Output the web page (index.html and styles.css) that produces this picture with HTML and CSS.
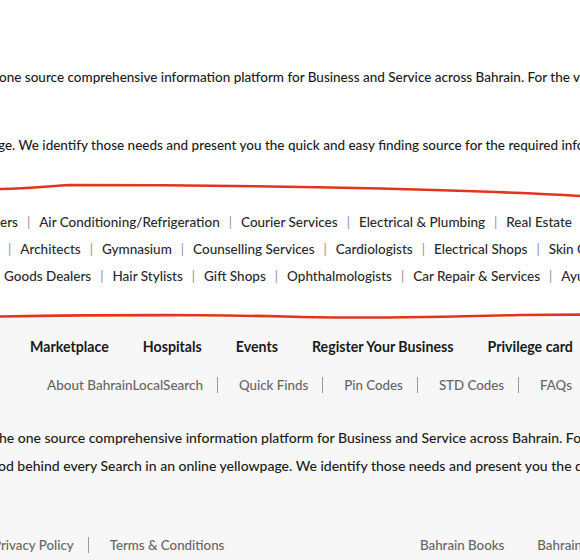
FILE: index.html
```html
<!DOCTYPE html>
<html>
<head>
<meta charset="utf-8">
<link rel="stylesheet" href="styles.css">
</head>
<body>
<div class="page">
  <section class="intro">
    <p class="intro-line l1">one source comprehensive information platform for Business and Service across Bahrain. For the visitors</p>
    <p class="intro-line l2">ge. We identify those needs and present you the quick and easy finding source for the required information</p>
  </section>

  <section class="cats">
    <div class="cat-row r1">
      <span class="cat">ers</span><span class="sep">|</span>
      <span class="cat">Air Conditioning/Refrigeration</span><span class="sep">|</span>
      <span class="cat">Courier Services</span><span class="sep">|</span>
      <span class="cat">Electrical &amp; Plumbing</span><span class="sep">|</span>
      <span class="cat">Real Estate</span><span class="sep">|</span>
    </div>
    <div class="cat-row r2">
      <span class="sep">|</span>
      <span class="cat">Architects</span><span class="sep">|</span>
      <span class="cat">Gymnasium</span><span class="sep">|</span>
      <span class="cat">Counselling Services</span><span class="sep">|</span>
      <span class="cat">Cardiologists</span><span class="sep">|</span>
      <span class="cat">Electrical Shops</span><span class="sep">|</span>
      <span class="cat">Skin Care</span>
    </div>
    <div class="cat-row r3">
      <span class="cat">Goods Dealers</span><span class="sep">|</span>
      <span class="cat">Hair Stylists</span><span class="sep">|</span>
      <span class="cat">Gift Shops</span><span class="sep">|</span>
      <span class="cat">Ophthalmologists</span><span class="sep">|</span>
      <span class="cat">Car Repair &amp; Services</span><span class="sep">|</span>
      <span class="cat">Ayurveda</span>
    </div>
  </section>

  <footer class="footer">
    <nav class="main-nav">
      <a>Marketplace</a>
      <a>Hospitals</a>
      <a>Events</a>
      <a>Register Your Business</a>
      <a>Privilege card</a>
    </nav>
    <nav class="sub-nav">
      <a>About BahrainLocalSearch</a><span class="fsep"></span>
      <a>Quick Finds</a><span class="fsep"></span>
      <a>Pin Codes</a><span class="fsep"></span>
      <a>STD Codes</a><span class="fsep"></span>
      <a>FAQs</a>
    </nav>
    <div class="about">
      <p>he one source comprehensive information platform for Business and Service across Bahrain. For the visitors</p>
      <p>od behind every Search in an online yellowpage. We identify those needs and present you the quick and easy</p>
    </div>
    <div class="bottom">
      <div class="legal">
        <a>Privacy Policy</a><span class="fsep"></span>
        <a>Terms &amp; Conditions</a>
      </div>
      <div class="sister">
        <a>Bahrain Books</a>
        <a>Bahrain Yellow</a>
      </div>
    </div>
  </footer>

  <svg class="marker" width="580" height="560" viewBox="0 0 580 560">
    <path d="M0 189 C 30 188.5, 50 186, 70 185 C 150 185, 250 185.5, 380 188.5 C 460 190.5, 530 193, 580 196" />
    <path d="M0 316.5 C 60 315.5, 120 315, 200 315.2 C 260 315.5, 300 317.3, 340 317.5 C 400 317.8, 460 316.5, 520 315 C 550 314.6, 570 314.6, 580 314.6" />
  </svg>
</div>
</body>
</html>
```

FILE: styles.css
```css
html, body {
  margin: 0;
  padding: 0;
  width: 580px;
  height: 560px;
  overflow: hidden;
  background: #ffffff;
}

.page {
  position: relative;
  width: 580px;
  height: 560px;
  overflow: hidden;
  font-family: Lato, "Open Sans", sans-serif;
  font-weight: 500;
  color: #1c1c1c;
}

.intro {
  height: 184px;
  padding-top: 68px;
  box-sizing: border-box;
}

.intro-line {
  margin: 0;
  font-size: 13.5px;
  line-height: 18px;
  white-space: nowrap;
  color: #1c1c1c;
}

.intro-line.l1 {
  margin-left: -1px;
}

.intro-line.l2 {
  margin-top: 50px;
  margin-left: -2px;
}

.cats {
  height: 134px;
  padding-top: 24px;
  box-sizing: border-box;
}

.cat-row {
  display: flex;
  align-items: center;
  height: 27px;
  font-size: 13.5px;
  color: #2a2a2a;
  white-space: nowrap;
}

.cat-row.r1 { margin-left: 0; }
.cat-row.r2 { margin-left: -1px; }
.cat-row.r3 { margin-left: 4px; }

.sep {
  color: #8f8f8f;
  margin: 0 9px;
  font-size: 13px;
  font-weight: 400;
}

.footer {
  background: #f7f7f7;
  height: 242px;
  padding-top: 19px;
  box-sizing: border-box;
}

.main-nav {
  display: flex;
  gap: 34px;
  padding-left: 30px;
  height: 18px;
  align-items: center;
  white-space: nowrap;
}

.main-nav a {
  font-size: 14.2px;
  font-weight: 700;
  color: #1a1a1a;
}

.sub-nav {
  display: flex;
  align-items: center;
  padding-left: 47px;
  margin-top: 21px;
  height: 18px;
  white-space: nowrap;
}

.sub-nav a,
.legal a,
.sister a {
  font-size: 13.3px;
  color: #666666;
}

.sub-nav a:first-child {
  font-size: 13.5px;
}

.fsep {
  display: inline-block;
  width: 1px;
  height: 16px;
  background: #9a9a9a;
  margin: 0 21px 0 14px;
}

.about {
  margin-top: 30px;
}

.about p {
  margin: 0;
  font-size: 14px;
  line-height: 28px;
  white-space: nowrap;
  color: #1c1c1c;
}

.about p:first-child { margin-left: -1px; }
.about p:last-child { margin-left: -2px; }

.bottom {
  display: grid;
  grid-template-columns: 420px auto;
  margin-top: 56px;
  height: 18px;
  align-items: center;
  white-space: nowrap;
}

.legal {
  display: flex;
  align-items: center;
  margin-left: -7px;
}

.sister {
  display: flex;
  gap: 33px;
}

.marker {
  position: absolute;
  left: 0;
  top: 0;
  pointer-events: none;
}

.marker path {
  fill: none;
  stroke: #e5341d;
  stroke-width: 2.6;
  stroke-linecap: round;
}
```
